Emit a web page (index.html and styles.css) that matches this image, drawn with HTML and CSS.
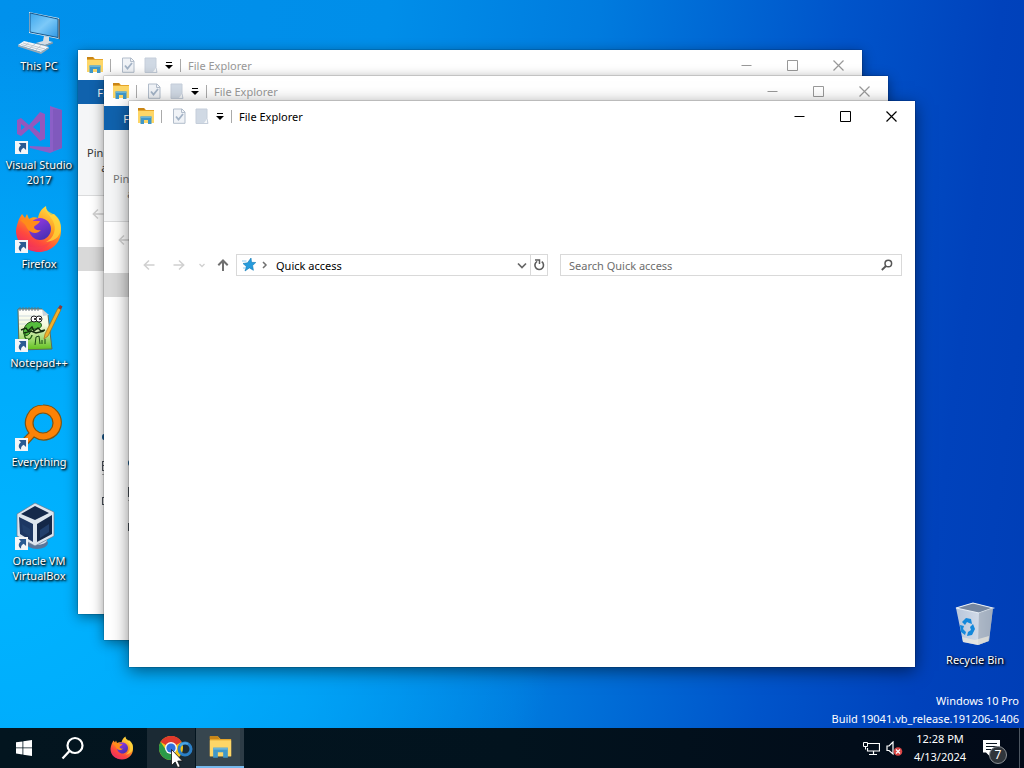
FILE: index.html
```html
<!DOCTYPE html>
<html lang="en">
<head>
<meta charset="utf-8">
<title>Desktop</title>
<link rel="stylesheet" href="styles.css">
</head>
<body>
<svg class="defs" aria-hidden="true">
  <defs>
    <linearGradient id="gFox" x1="0.8" y1="0" x2="0.2" y2="1"><stop offset="0" stop-color="#ffe54a"/><stop offset=".4" stop-color="#ff9a1f"/><stop offset=".7" stop-color="#ff4a3d"/><stop offset="1" stop-color="#e8206f"/></linearGradient>
    <linearGradient id="gGlobe" x1="0" y1="0" x2="0.6" y2="1"><stop offset="0" stop-color="#a03be8"/><stop offset="1" stop-color="#4a2fb5"/></linearGradient>
    <linearGradient id="gScreen" x1="0" y1="0" x2="1" y2="1"><stop offset="0" stop-color="#3aa5ec"/><stop offset=".5" stop-color="#7cc9f8"/><stop offset="1" stop-color="#2f98e4"/></linearGradient>
    <linearGradient id="gNote" x1="0" y1="0" x2="0" y2="1"><stop offset="0" stop-color="#fff"/><stop offset=".4" stop-color="#f3f9dc"/><stop offset="1" stop-color="#5fc01a"/></linearGradient>
    <linearGradient id="gBin" x1="0" y1="0" x2="1" y2="0"><stop offset="0" stop-color="#c4cfdd"/><stop offset=".6" stop-color="#dde3ea"/><stop offset="1" stop-color="#9aa8ba"/></linearGradient>
  </defs>
  <symbol id="arrow" viewBox="0 0 12 12"><path d="M0 0h12v12H0z" fill="#f4f6f8"/><path d="M3.500 1.800h6.700v6.500L8 6.300C6 7.300 5.400 8.800 5.600 10.800 2.600 9 3 5.800 5.500 4z" fill="#2b5b92"/></symbol>
  <symbol id="firefox" viewBox="0 0 48 48">
    <path d="M3 17c1-4 3-6 4-8l3 4 2-4 2 5c3-2 6-2 9-1 1-5 3-9 8-12 0 4 2 6 5 9l3-1c6 6 7 11 7 17 0 12-10 21-22 21S1 38 1 26c0-3 1-6 2-9z" fill="url(#gFox)"/>
    <path d="M30 2c0 5 5 8 8 14 4 8 1 17-7 21 11-1 15-8 15-14 0-8-4-12-8-14-4-2-7-4-8-7z" fill="#ffd83c" opacity=".75"/>
    <path d="M14 24c0-6 5-11 11-11s11 5 11 11-5 11-11 11-11-5-11-11z" fill="url(#gGlobe)"/>
    <path d="M5 15c6-3 10 0 13 1h7c-1 3-5 4-6 6 0 2 3 4 7 3-5 6-13 2-15-4-2-3-4-4-6-6z" fill="#ff8c1a"/>
    <path d="M2 28c3 13 20 20 34 8-6 12-33 15-34-8z" fill="#f43f54" opacity=".5"/>
  </symbol>
  <symbol id="folder" viewBox="0 0 20 18">
    <path d="M2 1h6l2 2h8v13H2z" fill="#e5a52c"/><path d="M2 1h6l1 2H2z" fill="#c98516"/>
    <path d="M2 4h16v12H2z" fill="#fdd667"/><path d="M4.500 17V9.500h11V17h-3.500v-4H8v4z" fill="#3f97c9"/><path d="M4.500 9.500h11v1.500h-11z" fill="#69b4d8"/>
  </symbol>
  <symbol id="props" viewBox="0 0 14 16"><path d="M1.500 1H10l3 3v11.300H1.500z" fill="#f0f3f7" stroke="#b2bdcb"/><path d="M9.500 1v3.500H13" fill="none" stroke="#b2bdcb"/><path d="M4 8.500l2.500 3L11 6" fill="none" stroke="#a3b3c6" stroke-width="1.800"/></symbol>
  <symbol id="newdoc" viewBox="0 0 14 16"><path d="M1 1h11v9.500l1 5H1z" fill="#d0d9e4" stroke="#c5ceda"/><path d="M12 11v4h-3z" fill="#f6f8fa"/></symbol>
  <symbol id="caret" viewBox="0 0 8 8"><path d="M1 1h6v1H1zM0 4h8L4 8z" fill="#000"/></symbol>
  <symbol id="min" viewBox="0 0 11 11"><path d="M.5 5.500h10" stroke="currentColor"/></symbol>
  <symbol id="max" viewBox="0 0 11 11"><path d="M.5.5h10v10H.5z" fill="none" stroke="currentColor"/></symbol>
  <symbol id="close" viewBox="0 0 11 11"><path d="M.5.5l10 10m0-10l-10 10" stroke="currentColor" stroke-width="1.200"/></symbol>
  <symbol id="left" viewBox="0 0 12 12"><path d="M11.500 6H1m5-4.500L1.300 6 6 10.500" fill="none" stroke="currentColor" stroke-width="1.500"/></symbol>
  <symbol id="right" viewBox="0 0 12 12"><path d="M.5 6H11M6 1.500L10.700 6 6 10.500" fill="none" stroke="currentColor" stroke-width="1.500"/></symbol>
  <symbol id="up" viewBox="0 0 12 12"><path d="M6 12V1.500M1.300 6.200L6 1.500l4.700 4.700" fill="none" stroke="currentColor" stroke-width="2"/></symbol>
  <symbol id="marks" viewBox="0 0 3 72"><path d="M1 3q0-3 2-3v6Q1 6 1 3z" fill="#16588c"/><path d="M1 27h2v1H2v3h1v1H2v4h1v1H1zM1 63h2v1H2v6h1v1H1z" fill="#4c535b"/><path d="M1 40h2v1H1z" fill="#aaa"/></symbol>
</svg>

<main class="desktop">
  <nav class="shortcuts" aria-label="Desktop icons">
    <button class="shortcut"><svg class="pic" viewBox="0 0 48 48"><path d="M14 5l30 6v21L14 26z" fill="#dbe9f3"/><path d="M15 6l28 6v18.500L15 25z" fill="url(#gScreen)" stroke="#17598d"/><path d="M43.500 11.500l1.500 1v20l-1.500-.5z" fill="#51606c"/><path d="M29 29l5 1v4l4 1-8 3-9-2 7-2z" fill="#d6dde3"/><path d="M21 36l9 2 8-3v1.500l-8 3-9-2z" fill="#8998a5"/><path d="M9 34l25 6-8 5L3 38z" fill="#f3f6f8"/><path d="M3 38l23 7 8-5v1.500L26 47 3 39.500z" fill="#9caab5"/><path d="M8 36l22 6M6 37.500l22 6M14 35.500l-5 4M20 37l-5 4M26 38.500l-5 4" stroke="#b5bfc8" stroke-width=".8"/></svg><span>This PC</span></button>
    <button class="shortcut"><svg class="pic" viewBox="0 0 48 48"><path d="M35 0l12 4v38l-12 5-20-5v-2l20 1z" fill="#8b5fc7"/><path d="M38 3l9 1v38l-9 3z" fill="#8059bd"/><path d="M2 14l4-2 8 7 11-13 5 2v25l-5 2-11-12-8 7-4-2zm4 4v6l4-3zm19-3l-7 6 7 6z" fill="#9358bd" fill-rule="evenodd"/><use href="#arrow" x="0" y="35" width="13" height="13"/></svg><span>Visual Studio 2017</span></button>
    <button class="shortcut"><svg class="pic" viewBox="0 0 48 48"><use href="#firefox" width="48" height="48"/><use href="#arrow" x="0" y="35" width="13" height="13"/></svg><span>Firefox</span></button>
    <button class="shortcut"><svg class="pic" viewBox="0 0 48 48"><path d="M3 5h24l6 6 4 34-33 1z" fill="url(#gNote)" stroke="#5c6b5a"/><path d="M27 5l1 7 6-1z" fill="#c9d4da"/><path d="M5 3v4m3-4v4m3-4v4m3-4v4m3-4v4m3-4v4m3-4v4" stroke="#677682"/><path d="M4 12h23M4 16h12M4 20h8" stroke="#b9c8d8" stroke-width=".7"/><path d="M9 25c2-7 9-9 15-7 4 2 3 6-2 7-5 0-7 1-7 4-4 5-8 2-6-4z" fill="#55bd3d" stroke="#184c12"/><path d="M6 26l5-2 2 3 4-4 2 4 4-3 3 3 4-1M9 29l7-2 5 2 8-2" fill="none" stroke="#142d10" stroke-width="1.400"/><path d="M10 29c-2 8 6 8 7 2" fill="none" stroke="#236118" stroke-width="1.500"/><circle cx="19" cy="15" r="3" fill="#fff" stroke="#222"/><circle cx="24" cy="15" r="3" fill="#fff" stroke="#222"/><circle cx="20" cy="15" r="1"/><circle cx="25" cy="15" r="1"/><path d="M20 41l1-8 3-1 1 8m2-4v4m3-5v5" fill="none" stroke="#174512"/><path d="M43 4l3 1.500L33 32l-4 3 1-5z" fill="#f0b02c" stroke="#a06b15" stroke-width=".7"/><path d="M43 4l2-3 2.500 1.500-1.500 3z" fill="#8b3a3a"/><use href="#arrow" x="0" y="35" width="13" height="13"/></svg><span>Notepad++</span></button>
    <button class="shortcut"><svg class="pic" viewBox="0 0 48 48"><path d="M28 2a17.500 17.500 0 1 1-9 32L9 45l-5-5 10-10A17.500 17.500 0 0 1 28 2zm0 8a10 10 0 1 0 0 20 10 10 0 0 0 0-20z" fill="#fc8206" stroke="#7c5414" stroke-width="1.200" fill-rule="evenodd"/><use href="#arrow" x="0" y="35" width="13" height="13"/></svg><span>Everything</span></button>
    <button class="shortcut"><svg class="pic" viewBox="0 0 48 48"><ellipse cx="22" cy="41" rx="11" ry="6" fill="#59769b"/><ellipse cx="22" cy="38" rx="10" ry="5" fill="#d3dfec"/><path d="M20 1l19 9v24L20 44 2 34V12z" fill="#dce5ef" stroke="#66788f" stroke-width=".7"/><path d="M20 4l14 7-14 7L6 12z" fill="#15294b"/><path d="M4 15l14 7v18L5 32z" fill="#1d3763"/><path d="M22 22l15-9v19l-15 8z" fill="#142748"/><path d="M7 22l8 5v8l-7-5zM25 28l9-6v8l-9 6z" fill="#223f6c"/><use href="#arrow" x="0" y="35" width="13" height="13"/></svg><span>Oracle VM VirtualBox</span></button>
  </nav>

  <section class="window window-back" aria-label="File Explorer">
    <header class="titlebar">
      <svg class="app" width="20" height="18"><use href="#folder"/></svg><i class="sep"></i>
      <button class="quick" aria-label="Properties"><svg width="14" height="16"><use href="#props"/></svg></button>
      <button class="quick" aria-label="New folder"><svg width="14" height="16"><use href="#newdoc"/></svg></button>
      <button class="more" aria-label="Customize toolbar"><svg width="8" height="8"><use href="#caret"/></svg></button><i class="sep"></i>
      <h2 class="title">File Explorer</h2>
      <div class="controls"><button aria-label="Minimize"><svg><use href="#min"/></svg></button><button aria-label="Maximize"><svg><use href="#max"/></svg></button><button aria-label="Close"><svg><use href="#close"/></svg></button></div>
    </header>
    <div class="tabs"><button class="file-tab">File</button></div>
    <div class="ribbon"><button class="pin">Pin to Quick access</button></div>
    <div class="navrow"><button class="nav" aria-label="Back"><svg><use href="#left"/></svg></button></div>
    <div class="selected"></div>
    <svg class="marks"><use href="#marks"/></svg>
  </section>

  <section class="window window-mid" aria-label="File Explorer">
    <header class="titlebar">
      <svg class="app" width="20" height="18"><use href="#folder"/></svg><i class="sep"></i>
      <button class="quick" aria-label="Properties"><svg width="14" height="16"><use href="#props"/></svg></button>
      <button class="quick" aria-label="New folder"><svg width="14" height="16"><use href="#newdoc"/></svg></button>
      <button class="more" aria-label="Customize toolbar"><svg width="8" height="8"><use href="#caret"/></svg></button><i class="sep"></i>
      <h2 class="title">File Explorer</h2>
      <div class="controls"><button aria-label="Minimize"><svg><use href="#min"/></svg></button><button aria-label="Maximize"><svg><use href="#max"/></svg></button><button aria-label="Close"><svg><use href="#close"/></svg></button></div>
    </header>
    <div class="tabs"><button class="file-tab">File</button></div>
    <div class="ribbon"><button class="pin faded">Pin to Quick access</button></div>
    <div class="navrow"><button class="nav" aria-label="Back"><svg><use href="#left"/></svg></button></div>
    <div class="selected"></div>
    <svg class="marks"><use href="#marks"/></svg>
  </section>

  <section class="window window-front" aria-label="File Explorer">
    <header class="titlebar">
      <svg class="app" width="20" height="18"><use href="#folder"/></svg><i class="sep"></i>
      <button class="quick" aria-label="Properties"><svg width="14" height="16"><use href="#props"/></svg></button>
      <button class="quick" aria-label="New folder"><svg width="14" height="16"><use href="#newdoc"/></svg></button>
      <button class="more" aria-label="Customize toolbar"><svg width="8" height="8"><use href="#caret"/></svg></button><i class="sep"></i>
      <h2 class="title">File Explorer</h2>
      <div class="controls"><button aria-label="Minimize"><svg><use href="#min"/></svg></button><button aria-label="Maximize"><svg><use href="#max"/></svg></button><button aria-label="Close"><svg><use href="#close"/></svg></button></div>
    </header>
    <div class="ribbon-space"></div>
    <div class="navrow">
      <button class="nav" aria-label="Back"><svg><use href="#left"/></svg></button>
      <button class="nav" aria-label="Forward"><svg><use href="#right"/></svg></button>
      <button class="nav recent" aria-label="Recent locations"><svg viewBox="0 0 12 12"><path d="M3.500 5L6 7.500 8.500 5" fill="none" stroke="currentColor" stroke-width="1.300"/></svg></button>
      <button class="nav up" aria-label="Up"><svg><use href="#up"/></svg></button>
      <div class="address">
        <svg class="star" viewBox="0 0 14 14"><path d="M9 0l.5 4.300 4.300.2-3.200 3 .8 4.800-4-2.400L3 13l1.300-4.600L1 5.500l4.500-.7z" fill="#259bdc" stroke="#147ab5" stroke-width=".6"/><path d="M0 3h4.500M1 10h3" stroke="#8acbf0"/></svg>
        <svg class="crumb" viewBox="0 0 6 8"><path d="M1 1l3 3-3 3" fill="none" stroke="#707070" stroke-width="1.500"/></svg>
        <span class="path">Quick access</span>
        <button class="drop" aria-label="Previous locations"><svg viewBox="0 0 12 12"><path d="M2 4.500L6 8.500l4-4" fill="none" stroke="#666" stroke-width="1.700"/></svg></button>
        <button class="refresh" aria-label="Refresh"><svg viewBox="0 0 12 12"><path d="M8.700 2.700A4.300 4.300 0 1 1 4.200 2.400" fill="none" stroke="#5c5c5c" stroke-width="1.600"/><path d="M2 1h4.500v4" fill="none" stroke="#5c5c5c" stroke-width="1.500"/></svg></button>
      </div>
      <div class="search"><input type="text" placeholder="Search Quick access" aria-label="Search Quick access"><svg viewBox="0 0 12 12"><circle cx="7.300" cy="4.500" r="3.300" fill="none" stroke="#555" stroke-width="1.500"/><path d="M5 7L.8 11" stroke="#555" stroke-width="1.800"/></svg></div>
    </div>
  </section>

  <div class="corner">
    <button class="shortcut"><svg class="pic" viewBox="0 0 48 48"><path d="M5 7l17-5 20 5-4 33-11 4-15-3z" fill="url(#gBin)" opacity=".94"/><path d="M5 7l17-5 20 5-14 5z" fill="#76879f" stroke="#e8eef5" stroke-width="1.200"/><path d="M28 12l14-5-4 33-11 4z" fill="#a4afbe" opacity=".8"/><path d="M11 36l13 3 14-4-.6 5L27 44l-15-3z" fill="#ede9df" opacity=".7"/><path d="M11 21l4-4 5 1 1 5-3-1-2-1-2 3zM9 24l4 1-1 3 3 3-1 3-4-3zM22 23l2 5-3 6-5 1 1-4 3-2-1-3z" fill="#1388db"/></svg><span>Recycle Bin</span></button>
    <p class="build">Windows 10 Pro<br>Build 19041.vb_release.191206-1406</p>
  </div>
</main>

<footer class="taskbar">
  <button class="task" aria-label="Start"><svg width="16" height="16" viewBox="0 0 16 16"><path d="M0 2.300L6.500 1.400v6.100H0zM7.300 1.300L16 0v7.500H7.300zM0 8.300h6.500v6.200L0 13.600zM7.300 8.300H16V16l-8.700-1.300z" fill="#fff"/></svg></button>
  <button class="task" aria-label="Search"><svg width="24" height="24" viewBox="0 0 24 24"><circle cx="14" cy="9.500" r="7.500" fill="none" stroke="#fff" stroke-width="2.200"/><path d="M8.500 15L1.500 22.500" stroke="#fff" stroke-width="2.300"/></svg></button>
  <button class="task" aria-label="Firefox"><svg width="24" height="24"><use href="#firefox"/></svg></button>
  <button class="task hover" aria-label="Chrome"><svg width="24" height="24" viewBox="0 0 24 24"><circle cx="12" cy="12" r="12" fill="#f5c518"/><path d="M12 12L1.600 6A12 12 0 0 1 22.400 6z" fill="#e0392c"/><path d="M1.600 6A12 12 0 0 0 12 24l5-9-10-1z" fill="#2b9a48"/><path d="M12 6h10.400A12 12 0 0 0 12 0z" fill="#e0392c"/><circle cx="12" cy="12" r="6" fill="#f5f8fc"/><circle cx="12" cy="12" r="4.600" fill="#2f72dd"/></svg>
    <svg class="busy" viewBox="0 0 16 16"><circle cx="8" cy="8" r="6" fill="none" stroke="#2b7fc6" stroke-width="3"/><path d="M3 5a6 6 0 0 1 8-2" fill="none" stroke="#4ba6e4" stroke-width="2"/></svg>
    <svg class="cursor" viewBox="0 0 12 19"><path d="M.5.5v16l3.700-3.500 2.500 5.500 2.500-1-2.500-5.500h4.800z" fill="#fff" stroke="#111" stroke-width=".8"/></svg></button>
  <button class="task active" aria-label="File Explorer"><svg width="27" height="24"><use href="#folder"/></svg></button>
  <div class="tray">
    <button class="tray-icon" aria-label="Network"><svg width="17" height="15" viewBox="0 0 17 15"><path d="M5 2.500h11.500v7.500H4.500V7M10.500 10v3.500M6 13.500h8" fill="none" stroke="#fff" stroke-width="1.200"/><path d="M.5 1.500h4v4h-4zM2.500 5.500v3" fill="none" stroke="#fff"/></svg></button>
    <button class="tray-icon" aria-label="Volume muted"><svg width="17" height="15" viewBox="0 0 17 15"><path d="M1 5h2l4-4v12L3 9.500H1z" fill="none" stroke="#fff" stroke-width="1.200"/><circle cx="12" cy="10.500" r="4.300" fill="#d94444"/><path d="M10 8.500l4 4m0-4l-4 4" stroke="#fff" stroke-width="1.200"/></svg></button>
    <time class="clock">12:28 PM<br>4/13/2024</time>
    <button class="notify" aria-label="Notifications"><svg width="17" height="17" viewBox="0 0 17 17"><path d="M0 0h17v12.500H7.500V17L3 12.500H0z" fill="#fff"/><path d="M3 3.500h11M3 6.500h11M3 9.500h7" stroke="#0b1620" stroke-width="1.200"/></svg><span class="badge">7</span></button>
    <i class="peek"></i>
  </div>
</footer>
</body>
</html>
```

FILE: styles.css
```css
* { box-sizing: border-box; }
body {
  margin: 0;
  height: 100vh;
  display: flex;
  flex-direction: column;
  overflow: hidden;
  font: 11px/15px "Noto Sans", "Open Sans", sans-serif;
  color: #000;
}
button { border: 0; padding: 0; background: none; font: inherit; color: inherit; }
svg { display: block; flex: none; }
.defs { position: absolute; width: 0; height: 0; }

.desktop {
  flex: 1;
  min-height: 0;
  position: relative;
  display: flex;
  justify-content: space-between;
  background:
    radial-gradient(ellipse 55% 75% at 0% 78%, #00b4ff 0%, rgba(0, 176, 255, .8) 45%, rgba(0, 160, 245, 0) 100%),
    linear-gradient(97deg, #0091ec 0%, #008ee9 35%, #007bde 54%, #0054ca 76%, #0042bc 90%, #003eb6 100%);
}

.shortcuts { display: grid; grid-template-columns: 78px; grid-auto-rows: 99px; align-content: start; padding-top: 7px; }
.shortcut { display: flex; flex-direction: column; align-items: center; justify-content: flex-start; gap: 3px; color: #fff; text-shadow: 1px 1px 2px #000, 1px 1px 3px #000; }
.pic { width: 48px; height: 48px; }

.window { position: absolute; background: #fff; box-shadow: 0 0 1px rgba(0, 0, 0, .7), 0 3px 12px rgba(0, 0, 0, .45); overflow: hidden; }
.window-back { inset: 50px 162px 114px 78px; color: #999; }
.window-mid { inset: 76px 136px 88px 104px; color: #999; }
.window-front { inset: 101px 109px 61px 129px; box-shadow: 0 0 1px rgba(0, 0, 0, .8), 0 4px 16px rgba(0, 0, 0, .5); }

.titlebar { height: 30px; display: flex; align-items: center; padding-left: 7px; }
.titlebar .app { margin-right: 5px; }
.sep { width: 1px; height: 13px; background: #aaa; }
.quick { width: 23px; height: 30px; display: grid; place-items: center end; }
.quick + .quick { margin-right: 7px; }
.sep + .quick { width: 24px; }
.more { margin-right: 7px; }
.title { margin: 0 0 0 7px; font: inherit; font-size: 11px; }
.controls { margin-left: auto; display: flex; padding-right: 1px; }
.controls button { width: 46px; height: 30px; display: grid; place-items: center; }
.controls svg { width: 11px; height: 11px; }

.tabs { height: 24px; display: flex; }
.file-tab { width: 56px; background: #1062ad; color: #fff; }
.ribbon { height: 92px; padding: 41px 0 0 6px; background: #f5f6f7; border-bottom: 1px solid #dadbdc; }
.pin { width: 68px; color: #333; }
.pin.faded { color: #777; }
.ribbon-space { height: 116px; }

.navrow { display: flex; padding: 7px 13px 22px 5px; }
.nav { width: 30px; height: 22px; display: grid; place-items: center; color: #d0d0d0; }
.nav svg { width: 12px; height: 12px; }
.nav.recent { width: 16px; }
.nav.up { width: 26px; color: #707070; }
.address { flex: 1 1 312px; height: 22px; display: flex; align-items: center; border: 1px solid #d9d9d9; }
.star { width: 14px; height: 14px; margin: 0 6px 0 5px; }
.crumb { width: 6px; height: 8px; margin-right: 8px; }
.path { flex: 1; }
.drop, .refresh { width: 17px; height: 20px; display: grid; place-items: center; }
.refresh { border-left: 1px solid #d9d9d9; }
.drop svg, .refresh svg { width: 12px; height: 12px; }
.search { flex: 1 1 342px; height: 22px; margin-left: 12px; display: flex; align-items: center; padding: 0 8px; border: 1px solid #d9d9d9; }
.search input { flex: 1; min-width: 0; border: 0; padding: 0; outline: 0; font: inherit; background: none; }
.search input::placeholder { color: #6d6d6d; opacity: 1; }
.search svg { width: 12px; height: 12px; }
.selected { width: 180px; height: 24px; background: #d9d9d9; }
.marks { width: 3px; height: 72px; margin: 163px 0 0 23px; }

.corner { margin-left: auto; display: flex; flex-direction: column; align-items: flex-end; justify-content: flex-end; }
.corner .shortcut { width: 78px; margin: 0 10px 25px 0; }
.build { margin: 0 5px 0 0; color: #fff; line-height: 18px; text-align: right; }

.taskbar { height: 40px; flex: none; display: flex; gap: 1px; background: linear-gradient(90deg, #03151f, #02131e 50%, #020a18); color: #fff; }
.task { width: 48px; display: grid; place-items: center; position: relative; }
.task.hover { background: #1b2a34; }
.task.active { background: #37464f; border-bottom: 2px solid #76b9ed; box-shadow: inset -4px 0 #2d3c46; }
.busy { position: absolute; width: 16px; height: 16px; left: 30px; top: 13px; }
.cursor { position: absolute; width: 12px; height: 19px; left: 24px; top: 21px; }
.tray { margin-left: auto; display: flex; align-items: center; }
.tray-icon { margin-right: 6px; }
.clock { width: 62px; text-align: center; line-height: 18px; }
.notify { position: relative; margin: 0 19px 0 12px; }
.badge { position: absolute; left: 6px; top: 6px; width: 18px; height: 18px; border: 1px solid #8b8f94; border-radius: 50%; background: #30353b; font-size: 12px; line-height: 16px; text-align: center; }
.peek { width: 1px; height: 40px; margin-right: 4px; background: #4d5661; }
```
